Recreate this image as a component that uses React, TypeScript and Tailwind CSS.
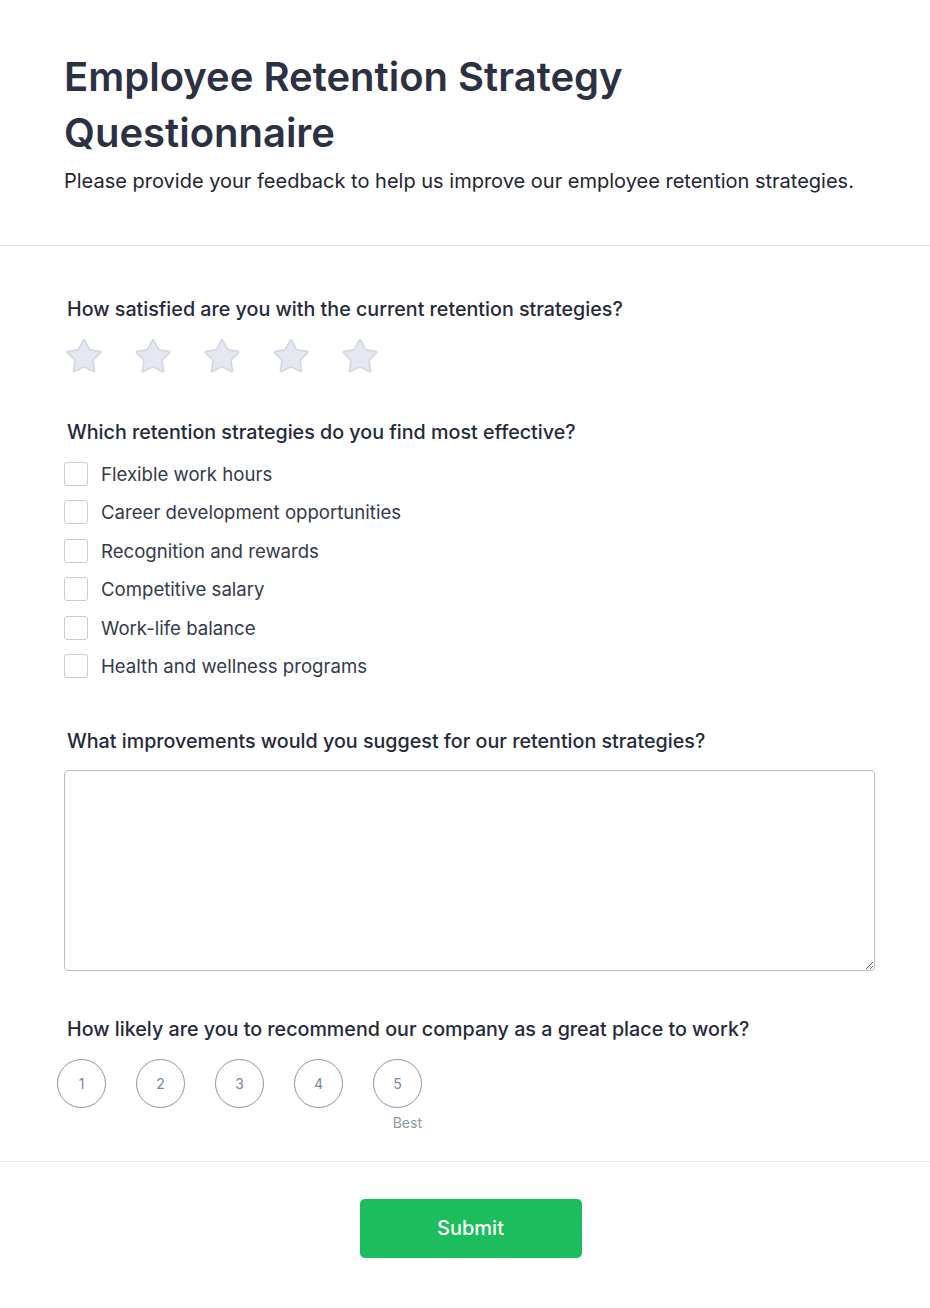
import { Star } from "lucide-react";

const strategies = [
  "Flexible work hours",
  "Career development opportunities",
  "Recognition and rewards",
  "Competitive salary",
  "Work-life balance",
  "Health and wellness programs",
];

export default function App() {
  return (
    <div className="min-h-[1308px] w-full bg-white font-['Inter',sans-serif] text-[#2b3040]">
      {/* Header */}
      <div className="border-b border-[#dfe1e8] pb-[50px] pl-16 pr-14 pt-[49px]">
        <h1 className="text-[40px] font-semibold leading-[56px] text-[#2b3142]">
          Employee Retention Strategy
          <br />
          Questionnaire
        </h1>
        <p className="mt-[6px] text-[20px] leading-7 text-[#1f2433]">
          Please provide your feedback to help us improve our employee retention strategies.
        </p>
      </div>

      {/* Questions */}
      <div className="border-b border-[#e8e9ee] pb-[28px] pl-16 pr-[55px] pt-[49px]">
        <div>
          <p className="pl-[3px] text-[19.7px] font-medium leading-7 text-[#252a3a]">
            How satisfied are you with the current retention strategies?
          </p>
          <div className="mt-[13px] flex gap-[29px]">
            {[1, 2, 3, 4, 5].map((n) => (
              <button key={n} type="button" className="flex h-10 w-10 items-center justify-center">
                <Star size={41} strokeWidth={1} className="fill-[#e5e8f0] text-[#d3d7e1]" />
              </button>
            ))}
          </div>
        </div>

        <div className="mt-[42px]">
          <p className="pl-[3px] text-[19.7px] font-medium leading-7 text-[#252a3a]">
            Which retention strategies do you find most effective?
          </p>
          <div className="mt-[14px] flex flex-col gap-[10.4px]">
            {strategies.map((s) => (
              <label key={s} className="flex h-7 items-center gap-[13px]">
                <span className="h-6 w-6 rounded-[3px] border border-[#c9ccd6] bg-white" />
                <span className="text-[18.6px] leading-7 text-[#343a4a]">{s}</span>
              </label>
            ))}
          </div>
        </div>

        <div className="mt-[47px]">
          <p className="pl-[3px] text-[19.7px] font-medium leading-7 text-[#252a3a]">
            What improvements would you suggest for our retention strategies?
          </p>
          <textarea className="mt-[15px] block h-[201px] w-full resize-y rounded-[4px] border border-[#b9bdca] p-3 text-[16px] outline-none" />
        </div>

        <div className="mt-[44px]">
          <p className="pl-[3px] text-[19.7px] font-medium leading-7 text-[#252a3a]">
            How likely are you to recommend our company as a great place to work?
          </p>
          <div className="-ml-[7px] mt-4 inline-flex flex-col">
            <div className="flex gap-[30px]">
              {[1, 2, 3, 4, 5].map((n) => (
                <button
                  key={n}
                  type="button"
                  className="flex h-[49px] w-[49px] items-center justify-center rounded-full border border-[#8a94ab] text-[14px] text-[#7886a0]"
                >
                  {n}
                </button>
              ))}
            </div>
            <span className="mt-[5px] text-right text-[14px] leading-5 text-[#8d97aa]">Best</span>
          </div>
        </div>
      </div>

      {/* Footer */}
      <div className="flex justify-center pl-16 pr-[55px] pt-[37px]">
        <button
          type="button"
          className="ml-[2px] h-[59px] w-[222px] rounded-[5px] bg-[#1bbd5c] text-[20px] font-medium text-white"
        >
          Submit
        </button>
      </div>
    </div>
  );
}
